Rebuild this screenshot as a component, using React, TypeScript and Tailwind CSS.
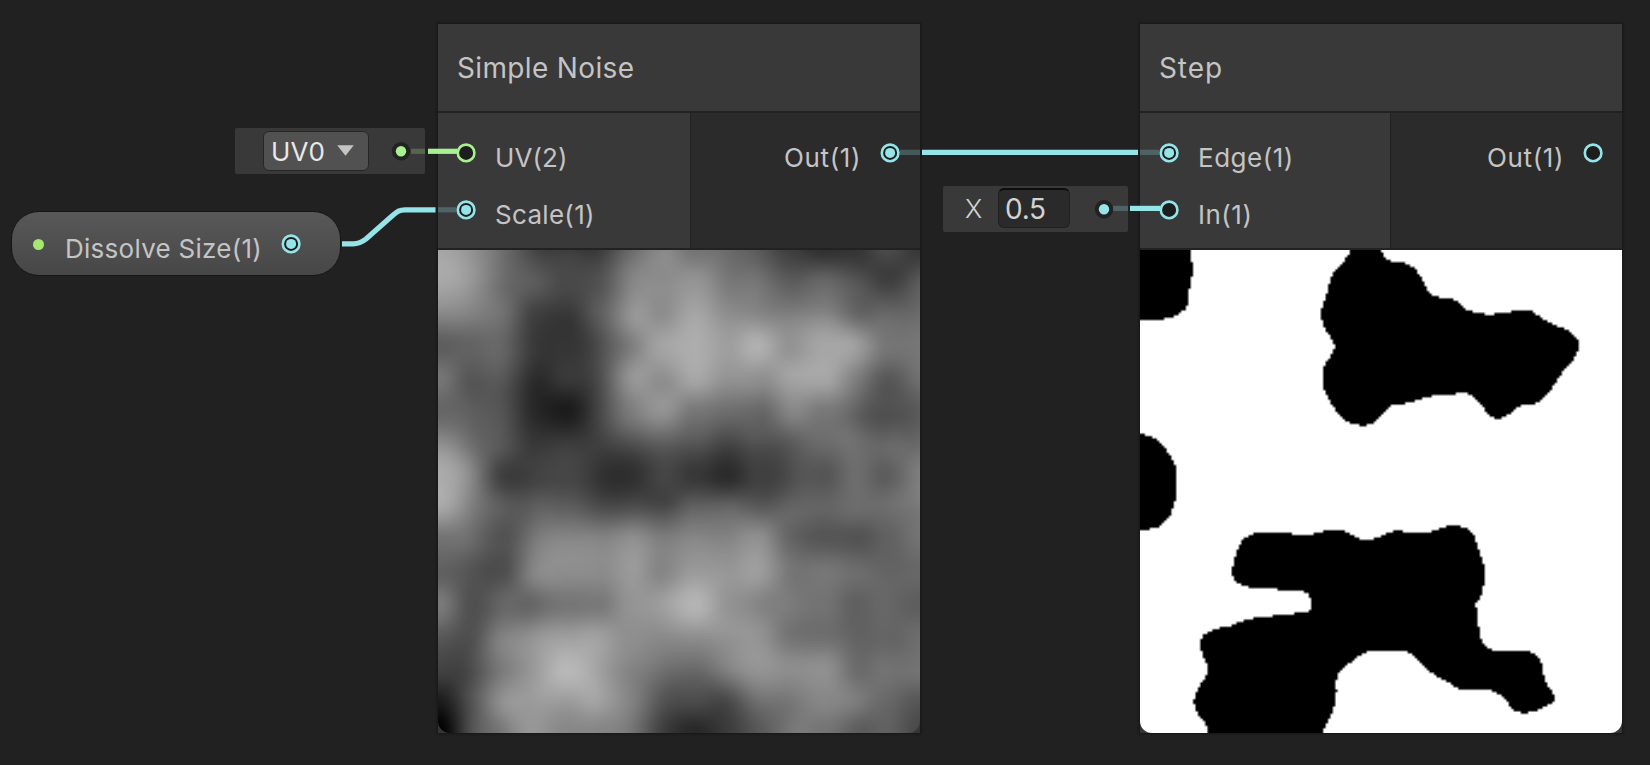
import { useEffect, useRef } from "react";

/* ---------- simple value noise, in single precision as a shader computes it ---------- */

const f = Math.fround;
const GRID = 18;
const SCALE = 15;
const RES = 200;
const CYAN = "#94e4e8";
const GREEN = "#a9f08e";

const fract = (v: number) => v - Math.floor(v);

function random(x: number, y: number) {
  const dot = f(f(x * f(12.9898)) + f(y * f(78.233)));
  const turns = fract(f(dot * f(1 / (2 * Math.PI))));
  return fract(f(f(Math.sin(f(f(2 * Math.PI) * turns))) * f(43758.5453)));
}

const lattice: number[] = [];
for (let j = 0; j < GRID; j++) {
  for (let i = 0; i < GRID; i++) lattice.push(random(i, j));
}

function valueNoise(x: number, y: number) {
  const i = Math.floor(x);
  const j = Math.floor(y);
  let u = x - i;
  let v = y - j;
  u = u * u * (3 - 2 * u);
  v = v * v * (3 - 2 * v);
  const o = j * GRID + i;
  const low = lattice[o] * (1 - u) + lattice[o + 1] * u;
  const high = lattice[o + GRID] * (1 - u) + lattice[o + GRID + 1] * u;
  return low * (1 - v) + high * v;
}

function simpleNoise(u: number, v: number) {
  const x = u * SCALE;
  const y = v * SCALE;
  return (
    valueNoise(x, y) * 0.125 +
    valueNoise(x / 2, y / 2) * 0.25 +
    valueNoise(x / 4, y / 4) * 0.5
  );
}

const step = (edge: number, value: number) => (value >= edge ? 1 : 0);

function Preview({ shade }: { shade: (u: number, v: number) => number }) {
  const ref = useRef<HTMLCanvasElement>(null);
  useEffect(() => {
    const ctx = ref.current?.getContext("2d");
    if (!ctx) return;
    const img = ctx.createImageData(RES, RES);
    for (let y = 0; y < RES; y++) {
      for (let x = 0; x < RES; x++) {
        const g = Math.round(shade((x + 0.5) / RES, 1 - (y + 0.5) / RES) * 255);
        const o = (y * RES + x) * 4;
        img.data[o] = img.data[o + 1] = img.data[o + 2] = g;
        img.data[o + 3] = 255;
      }
    }
    ctx.putImageData(img, 0, 0);
  }, [shade]);
  return <canvas ref={ref} width={RES} height={RES} className="block h-[483px] w-full rounded-b-[12px]" />;
}

const noiseShade = (u: number, v: number) => simpleNoise(u, v);
const stepShade = (u: number, v: number) => step(simpleNoise(u, v), 0.5);

/* ---------- node parts ---------- */

function Port({ color, connected }: { color: string; connected?: boolean }) {
  return (
    <svg width="20" height="20" viewBox="0 0 20 20" className="shrink-0">
      <circle cx="10.1" cy="9.9" r="8.3" fill="#1d1d1d" stroke={color} strokeWidth="2.6" />
      {connected && <circle cx="10.1" cy="9.9" r="5" fill={color} />}
    </svg>
  );
}

type Input = { label: string; color: string; connected?: boolean; tracking: string };

function InputRow({ label, color, connected, tracking }: Input) {
  return (
    <div className="flex h-[57px] items-center gap-[19px]">
      <Port color={color} connected={connected} />
      <span className={`${tracking} pt-[11px] text-[26px] leading-[32px]`}>{label}</span>
    </div>
  );
}

type NodeProps = {
  title: string;
  titleClass: string;
  inputs: Input[];
  output: { label: string; connected?: boolean };
  inputClass: string;
  outputClass: string;
  shade: (u: number, v: number) => number;
};

function GraphNode({ title, titleClass, inputs, output, inputClass, outputClass, shade }: NodeProps) {
  return (
    <div className="flex flex-col bg-[#353535] text-[#c4c4c4] shadow-[0_0_0_1px_#191919,0_0_3px_1px_rgba(0,0,0,0.3)]">
      <div className={`${titleClass} flex h-[87px] items-center bg-[#393939] pl-[19px] pt-px text-[28px] leading-[34px]`}>
        {title}
      </div>
      <div className="flex h-[139px] gap-px border-y-2 border-[#222222] bg-[#222222]">
        <div className={`${inputClass} flex flex-col bg-[#393939] pt-[11px]`}>
          {inputs.map((i) => (
            <InputRow key={i.label} {...i} />
          ))}
        </div>
        <div className={`${outputClass} flex flex-1 justify-end bg-[#2b2b2b] pt-[11px]`}>
          <div className="flex h-[57px] items-center gap-[19px]">
            <span className="pt-[11px] text-[26px] leading-[32px] tracking-[0.6px]">{output.label}</span>
            <Port color={CYAN} connected={output.connected} />
          </div>
        </div>
      </div>
      <Preview shade={shade} />
    </div>
  );
}

function MiniPort({ color }: { color: string }) {
  return (
    <svg width="20" height="20" viewBox="0 0 20 20" className="shrink-0">
      <circle cx="10" cy="10.3" r="9.2" fill="#222222" />
      <circle cx="10" cy="10.3" r="5.2" fill={color} />
    </svg>
  );
}

export default function App() {
  return (
    <div className="relative h-[765px] w-[1650px] overflow-hidden bg-[#212121] font-['Inter','Liberation_Sans',sans-serif]">
      <div className="absolute left-[438px] top-[24px] w-[482px]">
        <GraphNode
          title="Simple Noise"
          titleClass="tracking-[0.35px]"
          inputs={[
            { label: "UV(2)", color: GREEN, tracking: "tracking-[0.1px]" },
            { label: "Scale(1)", color: CYAN, connected: true, tracking: "tracking-[0.3px]" },
          ]}
          output={{ label: "Out(1)", connected: true }}
          inputClass="w-[252px] pl-[18px]"
          outputClass="pr-[20px]"
          shade={noiseShade}
        />
      </div>

      <div className="absolute left-[1140px] top-[24px] w-[482px]">
        <GraphNode
          title="Step"
          titleClass="tracking-[0.9px]"
          inputs={[
            { label: "Edge(1)", color: CYAN, connected: true, tracking: "tracking-[0.5px]" },
            { label: "In(1)", color: CYAN, tracking: "tracking-[0.5px]" },
          ]}
          output={{ label: "Out(1)" }}
          inputClass="w-[250px] pl-[19px]"
          outputClass="pr-[19px]"
          shade={stepShade}
        />
      </div>

      <div className="absolute left-[235px] top-[128px] flex h-[46px] w-[190px] items-center rounded-[2px] bg-[#393939] pl-[28px]">
        <div className="flex h-[40px] w-[106px] items-center gap-[12px] rounded-[6px] border border-[#262626] bg-[#515151] pl-[7px] pt-px text-[26px] leading-[32px] tracking-[0.2px] text-[#e8e8e8]">
          UV0
          <svg width="17" height="11" viewBox="0 0 17 11" className="mb-[2px]">
            <path d="M0.2 0.3H16.8L8.5 10.7Z" fill="#c4c4c4" />
          </svg>
        </div>
        <div className="ml-[22px]">
          <MiniPort color={GREEN} />
        </div>
      </div>

      <div className="absolute left-[943px] top-[186px] flex h-[46px] w-[185px] items-center rounded-[2px] bg-[#393939] pl-[22px] text-[26px] leading-[32px] text-[#d2d2d2]">
        <span className="w-[33px] font-light">X</span>
        <div className="mb-[3px] flex h-[40px] w-[72px] items-center rounded-[6px] border border-t-2 border-[#202020] border-t-[#0d0d0d] bg-[#2a2a2a] pl-[6px] pt-[2px] text-[28px] tracking-[-0.3px]">
          0.5
        </div>
        <div className="ml-[24px]">
          <MiniPort color={CYAN} />
        </div>
      </div>

      <div className="absolute left-[11px] top-[211px] flex h-[65px] w-[330px] items-center rounded-[28px] border border-[#161616] bg-linear-to-b from-[#585858] to-[#474747] pl-[21px] text-[26px] leading-[32px] text-[#c4c4c4]">
        <div className="mt-[2px] h-[11px] w-[11px] rounded-full bg-[#a6e86f]" />
        <span className="ml-[21px] w-[204px] pt-[11px] tracking-[0.27px]">Dissolve Size(1)</span>
        <div className="ml-[12px]">
          <Port color={CYAN} connected />
        </div>
      </div>

      <svg width="1650" height="765" viewBox="0 0 1650 765" fill="none" strokeWidth="5.2" className="absolute left-0 top-0">
        <path d="M411 151.3H425" stroke={GREEN} strokeOpacity="0.25" />
        <path d="M428 151.3H457.3" stroke={GREEN} />
        <path d="M342 243.8H353C359 243.8 362 242.2 366 239L392 216C397 211.8 399 209.8 405 209.8H435.5" stroke={CYAN} />
        <path d="M438 209.8H456.5" stroke={CYAN} strokeOpacity="0.25" />
        <path d="M900 152.4H920M1140 152.4H1159.5" stroke={CYAN} strokeOpacity="0.25" />
        <path d="M922 152.4H1138" stroke={CYAN} />
        <path d="M1113 208.4H1128" stroke={CYAN} strokeOpacity="0.25" />
        <path d="M1130 208.4H1160" stroke={CYAN} />
      </svg>
    </div>
  );
}
